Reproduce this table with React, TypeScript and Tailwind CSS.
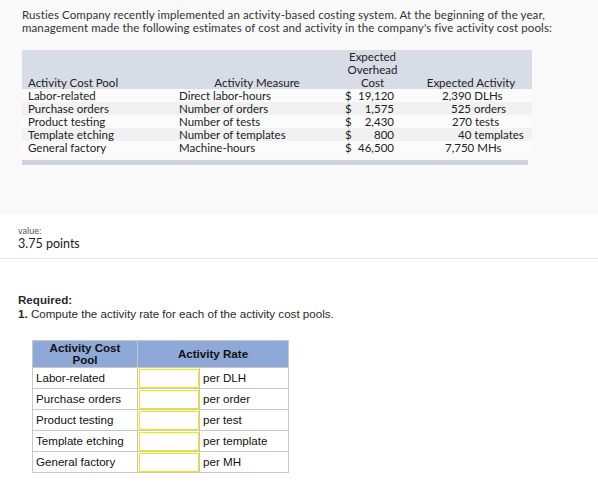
const pools = [
  { name: 'Labor-related', measure: 'Direct labor-hours', cost: '19,120', activity: '2,390 DLHs', pad: 'pl-[32px]', unit: 'per DLH' },
  { name: 'Purchase orders', measure: 'Number of orders', cost: '1,575', activity: '525 orders', pad: 'pl-[41px]', unit: 'per order' },
  { name: 'Product testing', measure: 'Number of tests', cost: '2,430', activity: '270 tests', pad: 'pl-[42px]', unit: 'per test' },
  { name: 'Template etching', measure: 'Number of templates', cost: '800', activity: '40 templates', pad: 'pl-[48px]', unit: 'per template' },
  { name: 'General factory', measure: 'Machine-hours', cost: '46,500', activity: '7,750 MHs', pad: 'pl-[35px]', unit: 'per MH' },
];

function EstimatesTable() {
  return (
    <div className="ml-[22px] mt-[16px] w-[510px] text-[11.5px] leading-[13px] text-[#222]">
      <div className="grid grid-cols-[157px_156px_75px_122px] bg-[#d8dce6]">
        <div className="flex items-end pl-[6px]">Activity Cost Pool</div>
        <div className="flex items-end justify-center">Activity Measure</div>
        <div className="text-center">
          Expected
          <br />
          Overhead
          <br />
          Cost
        </div>
        <div className="flex items-end justify-center">Expected Activity</div>
      </div>
      {pools.map((p, i) => (
        <div
          key={p.name}
          className={`grid grid-cols-[157px_156px_75px_122px] ${i % 2 === 1 ? 'bg-[#f1f1f1]' : 'bg-[#fbfbfb]'}`}
        >
          <div className="pl-[6px]">{p.name}</div>
          <div>{p.measure}</div>
          <div className="flex justify-between pl-[10px] pr-[16px]">
            <span>$</span>
            <span>{p.cost}</span>
          </div>
          <div className={p.pad}>{p.activity}</div>
        </div>
      ))}
      <div className="mt-[6px] h-[5px] w-[506px] bg-[#ccd3e0]" />
    </div>
  );
}

function RateTable() {
  return (
    <table className="ml-[32px] mt-[19px] w-[257px] border-collapse font-['Liberation_Sans',Arial,sans-serif] text-[11.6px] text-[#111]">
      <thead>
        <tr className="bg-[#8ea8d8]">
          <th className="h-[27px] w-[105px] border border-[#c8c8c8] px-1 text-center font-bold leading-[12px]">
            <div>Activity Cost</div>
            <div>Pool</div>
          </th>
          <th colSpan={2} className="border border-[#c8c8c8] text-center font-bold">
            Activity Rate
          </th>
        </tr>
      </thead>
      <tbody>
        {pools.map((p) => (
          <tr key={p.name} className="h-[21px] bg-white">
            <td className="border border-[#c8c8c8] px-[3px]">{p.name}</td>
            <td className="w-[62px] border border-[#c8c8c8] p-0 align-middle">
              <div className="mx-auto h-[19px] w-[60px] border border-[#f5e800] bg-white" />
            </td>
            <td className="border border-[#c8c8c8] px-[3px]">{p.unit}</td>
          </tr>
        ))}
      </tbody>
    </table>
  );
}

export default function App() {
  return (
    <div className="h-[497px] w-[598px] bg-white font-['Lato','Open_Sans',sans-serif]">
      <div className="h-[215px] overflow-hidden bg-[#f9f9f9] pt-[8px]">
        <p className="pl-[22px] text-[11.5px] leading-[13px] tracking-[0.1px] text-[#333]">
          Rusties Company recently implemented an activity-based costing system. At the beginning of the year,
          <br />
          management made the following estimates of cost and activity in the company's five activity cost pools:
        </p>
        <EstimatesTable />
      </div>

      <div className="border-b border-[#e6e6e6] pb-[6px] pl-[18px] pt-[10px]">
        <div className="text-[9px] leading-[11px] text-[#555]">value:</div>
        <div className="text-[12.5px] leading-[16px] text-[#222]">3.75 points</div>
      </div>

      <div className="pl-[18px] pt-[34px] font-['Liberation_Sans',Arial,sans-serif] text-[11.6px] leading-[14px] text-[#2a2a2a]">
        <div className="font-bold">Required:</div>
        <div>
          <span className="font-bold">1.</span> Compute the activity rate for each of the activity cost pools.
        </div>
      </div>

      <RateTable />
    </div>
  );
}
